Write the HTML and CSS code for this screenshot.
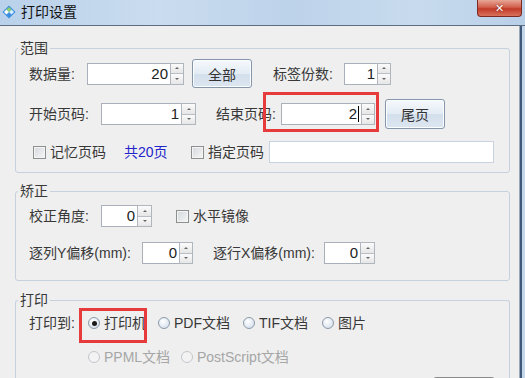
FILE: index.html
```html
<!DOCTYPE html>
<html lang="zh-CN">
<head>
<meta charset="UTF-8" />
<title>打印设置</title>
<link rel="stylesheet" href="styles.css">
</head>
<body>
  <div class="window">
    <div class="titlebar">
      <svg class="app-icon" width="14" height="14" viewBox="0 0 14 14">
        <path d="M7 0.5 L13.5 7 L7 13.5 L0.5 7 Z" fill="#3b8ee0"/>
        <path d="M4.5 4.5 L7 7 L4.5 9.5 L2 7 Z" fill="#ffffff"/>
        <path d="M9.5 4.5 L12 7 L9.5 9.5 L7 7 Z" fill="#d8ecff"/>
        <path d="M7 2 L9.5 4.5 L7 7 L4.5 4.5 Z" fill="#8fd06a"/>
      </svg>
      <span class="title">打印设置</span>
      <div class="close"><span>✕</span></div>
    </div>

    <div class="client">
      <fieldset class="group g-range">
        <legend>范围</legend>
        <div class="row r-top">
          <span class="lbl" style="width:58px">数据量:</span>
          <div class="spin"><div class="field" style="width:83px">20</div><div class="arrows"><i class="up"></i><i class="dn"></i></div></div>
          <button class="btn b-all">全部</button>
          <span class="lbl" style="width:71px;margin-left:21px">标签份数:</span>
          <div class="spin"><div class="field" style="width:33px">1</div><div class="arrows"><i class="up"></i><i class="dn"></i></div></div>
        </div>
        <div class="row r-pages">
          <span class="lbl" style="width:72px">开始页码:</span>
          <div class="spin"><div class="field" style="width:80px">1</div><div class="arrows wide"><i class="up"></i><i class="dn"></i></div></div>
          <span class="lbl" style="width:65px;margin-left:20px">结束页码:</span>
          <div class="spin marked">
            <div class="field" style="width:80px">2<span class="caret"></span></div><div class="arrows"><i class="up"></i><i class="dn"></i></div>
            <span class="redbox rb-end"></span>
          </div>
          <button class="btn b-last">尾页</button>
        </div>
        <div class="row r-memo">
          <span class="check" style="width:91px"><span class="box"></span>记忆页码</span>
          <span class="total">共20页</span>
          <span class="check" style="width:78px"><span class="box"></span>指定页码</span>
          <div class="textfield"></div>
        </div>
      </fieldset>

      <fieldset class="group g-fix">
        <legend>矫正</legend>
        <div class="row r-angle">
          <span class="lbl" style="width:72px">校正角度:</span>
          <div class="spin"><div class="field" style="width:36px">0</div><div class="arrows wide"><i class="up"></i><i class="dn"></i></div></div>
          <span class="check" style="margin-left:24px"><span class="box"></span>水平镜像</span>
        </div>
        <div class="row r-offset">
          <span class="lbl" style="width:113px">逐列Y偏移(mm):</span>
          <div class="spin"><div class="field" style="width:37px">0</div><div class="arrows"><i class="up"></i><i class="dn"></i></div></div>
          <span class="lbl" style="width:111px;margin-left:20px">逐行X偏移(mm):</span>
          <div class="spin"><div class="field" style="width:36px">0</div><div class="arrows wide"><i class="up"></i><i class="dn"></i></div></div>
        </div>
      </fieldset>

      <fieldset class="group g-print">
        <legend>打印</legend>
        <div class="row r-to">
          <span class="lbl" style="width:59px">打印到:</span>
          <span class="radio on marked" style="width:70px"><span class="dot"></span>打印机<span class="redbox rb-printer"></span></span>
          <span class="radio" style="width:85px"><span class="dot"></span>PDF文档</span>
          <span class="radio" style="width:79px"><span class="dot"></span>TIF文档</span>
          <span class="radio"><span class="dot"></span>图片</span>
        </div>
        <div class="row r-more">
          <span class="radio off" style="width:93px"><span class="dot"></span>PPML文档</span>
          <span class="radio off"><span class="dot"></span>PostScript文档</span>
        </div>
        <div class="row r-btns">
          <button class="btn b-ok"></button>
        </div>
      </fieldset>
    </div>
  </div>
</body>
</html>
```

FILE: styles.css
```css
* {
  box-sizing: border-box;
}
body {
  margin: 0;
  background: #c3d6ea;
  font-family: 'Liberation Sans', 'Noto Sans CJK SC', sans-serif;
  font-size: 14px;
  color: #383838;
  overflow: hidden;
}
.window {
  width: 525px;
  height: 378px;
  overflow: hidden;
}
.titlebar {
  height: 26px;
  display: flex;
  align-items: flex-start;
  background: linear-gradient(to right, #b9d1ea, #cadcef 30%, #bdd3ea 55%, #c8dbee 80%, #b8cfe8);
  border-bottom: 1px solid #5e6e82;
}
.app-icon {
  margin: 5px 0 0 2px;
}
.title {
  margin: 4px 0 0 5px;
  line-height: 16px;
  color: #111;
}
.close {
  margin-left: auto;
  margin-right: 3px;
  width: 45px;
  height: 17px;
  border: 1px solid #7d2a22;
  border-top: none;
  border-radius: 0 0 4px 4px;
  background: linear-gradient(#e7a796, #d2604d 45%, #c13a28 55%, #d9725c);
  display: flex;
  justify-content: center;
  align-items: center;
  color: #fff;
  font-size: 11px;
  font-weight: bold;
  font-family: 'DejaVu Sans', sans-serif;
  text-shadow: 0 0 2px #6a1a12;
}
.client {
  width: 520px;
  height: 352px;
  background: #efefef;
  border-right: 1px solid #9ba8b6;
  box-shadow: 2px 0 0 #40597a;
  padding-top: 14px;
}
.group {
  margin: 0 0 0 15px;
  width: 495px;
  min-width: 0;
  padding: 0;
  border: 1px solid #c6d1dd;
  border-radius: 3px;
}
.group legend {
  margin-left: 2px;
  padding: 0 2px;
  line-height: 16px;
  height: 16px;
}
.g-range { padding-bottom: 9px; }
.g-fix { margin-top: 10px; padding-bottom: 16px; }
.g-print { margin-top: 11px; padding-bottom: 0; border-bottom: none; }
.row {
  display: flex;
  align-items: center;
  margin-left: 13px;
  position: relative;
}
.r-top { height: 29px; margin-top: 3px; }
.r-pages { height: 30px; margin-top: 11px; }
.r-memo { height: 22px; margin-top: 12px; }
.r-angle { height: 22px; margin-top: 6px; }
.r-offset { height: 22px; margin-top: 15px; }
.r-to { height: 22px; margin-top: 4px; }
.r-more { height: 22px; margin-top: 12px; padding-left: 59px; }
.r-btns { height: 24px; margin-top: 9px; justify-content: flex-end; padding-right: 14px; }
.lbl {
  flex: 0 0 auto;
  white-space: nowrap;
  line-height: 16px;
}
.spin {
  display: flex;
  height: 22px;
  flex: 0 0 auto;
  position: relative;
}
.field {
  height: 22px;
  background: #fff;
  border: 1px solid #a9b0b9;
  border-right: none;
  text-align: right;
  padding-right: 2px;
  line-height: 20px;
  font-size: 15px;
  color: #222;
}
.caret {
  display: inline-block;
  width: 1px;
  height: 16px;
  background: #000;
  vertical-align: -3px;
  margin-left: 1px;
}
.arrows {
  width: 14px;
  height: 22px;
  display: flex;
  flex-direction: column;
  border: 1px solid #b0b6bd;
  background: #f4f4f4;
}
.arrows.wide { width: 15px; }
.arrows i {
  flex: 1;
  display: flex;
  justify-content: center;
  align-items: center;
  background: linear-gradient(#fbfbfb, #e6e6e6);
}
.arrows i.up { border-bottom: 1px solid #b9bec4; }
.arrows i::before {
  content: '';
  border-left: 2px solid transparent;
  border-right: 2px solid transparent;
}
.arrows i.up::before { border-bottom: 2px solid #666; }
.arrows i.dn::before { border-top: 2px solid #666; }
.btn {
  font-family: inherit;
  font-size: 14px;
  color: #333;
  width: 60px;
  padding: 0;
  border: 1px solid #8596ab;
  border-radius: 3px;
  background: linear-gradient(#f6f9fc, #e3ebf4 50%, #d3dfec 51%, #dce6f1);
  box-shadow: inset 0 0 0 1px #fbfdff;
  flex: 0 0 auto;
}
.b-all { height: 29px; margin-left: 8px; }
.b-last { height: 30px; margin-left: 10px; }
.b-ok { width: 62px; height: 24px; background: #e4e4e4; border-color: #8a8a8a; }
.check, .radio {
  display: inline-flex;
  align-items: center;
  flex: 0 0 auto;
  white-space: nowrap;
  line-height: 16px;
  position: relative;
}
.r-memo .check:first-child { margin-left: 4px; }
.check .box {
  width: 13px;
  height: 13px;
  border: 1px solid #8e8f8f;
  background: linear-gradient(135deg, #d4d8dc, #f5f6f7);
  box-shadow: inset 0 0 0 1px #f4f4f4;
  margin-right: 4px;
}
.total {
  width: 67px;
  color: #2323cc;
  line-height: 16px;
  flex: 0 0 auto;
}
.textfield {
  width: 225px;
  height: 22px;
  background: #fff;
  border: 1px solid #c8d3df;
}
.radio .dot {
  width: 12px;
  height: 12px;
  border-radius: 50%;
  border: 1px solid #8d9aa8;
  background: radial-gradient(circle at 40% 35%, #ffffff, #dbe5ef 70%, #c7d4e2);
  margin-right: 4px;
  display: flex;
  justify-content: center;
  align-items: center;
}
.radio.on .dot::after {
  content: '';
  width: 5px;
  height: 5px;
  border-radius: 50%;
  background: #1a1a1a;
}
.radio.off {
  color: #a6a6a6;
}
.radio.off .dot {
  border-color: #c2c6cb;
  background: #f3f3f3;
}
.redbox {
  position: absolute;
  border: 3px solid #e73a3a;
  pointer-events: none;
}
.rb-end {
  left: -18px;
  top: -11px;
  width: 116px;
  height: 40px;
}
.rb-printer {
  left: -9px;
  top: -7px;
  width: 68px;
  height: 35px;
}
```
